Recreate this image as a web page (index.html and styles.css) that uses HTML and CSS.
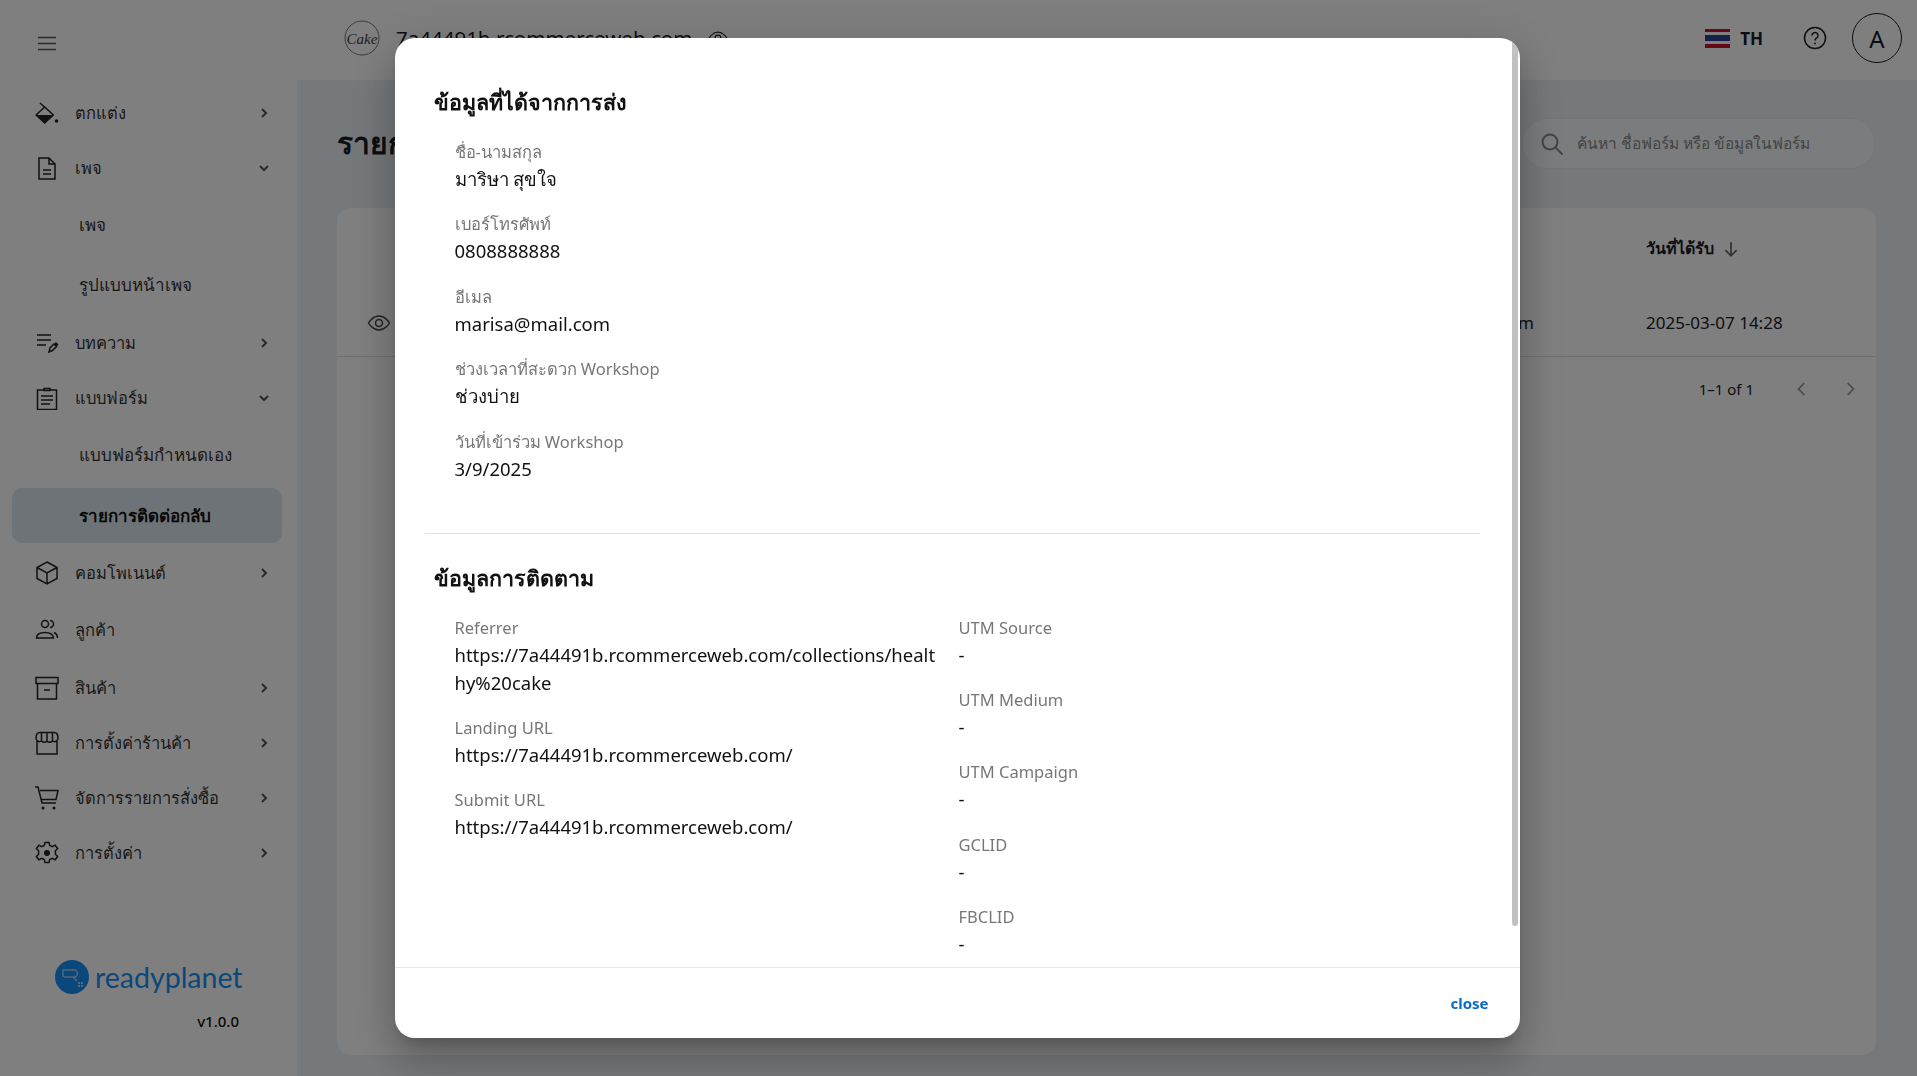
FILE: index.html
```html
<!DOCTYPE html>
<html lang="th">
<head>
    <meta charset="UTF-8">
    <meta name="viewport" content="width=device-width, initial-scale=1.0">
    <title>รายการติดต่อกลับ</title>
    <link rel="stylesheet" href="styles.css">
</head>
<body>

<div class="app">
    <!-- Sidebar -->
    <aside class="sidebar">
        <button class="burger" aria-label="menu">
            <svg viewBox="0 0 24 24" width="24" height="24"><path d="M4 6.500h18M4 12.500h18M4 18.500h18" class="ln"/></svg>
        </button>

        <nav class="menu">
            <a class="menu-item">
                <svg class="menu-icon" viewBox="0 0 24 24"><path d="M1 14l8.700-8 8.600 8-8.600 8zM5 2l5 4.500" class="ln"/><path d="M1 14h17.300l-8.600 8z" class="fill"/><circle cx="21.500" cy="20" r="1.800" class="fill"/></svg>
                <span>ตกแต่ง</span>
                <svg class="chev" viewBox="0 0 12 12"><path d="M4 2l4 4-4 4" class="ln2"/></svg>
            </a>
            <a class="menu-item">
                <svg class="menu-icon" viewBox="0 0 24 24"><path d="M4 2h10l6 6v15H4zM14 2v6h6M8 14h8M8 18h8" class="ln"/></svg>
                <span>เพจ</span>
                <svg class="chev" viewBox="0 0 12 12"><path d="M2 4l4 4 4-4" class="ln2"/></svg>
            </a>
            <a class="menu-sub">เพจ</a>
            <a class="menu-sub">รูปแบบหน้าเพจ</a>
            <a class="menu-item">
                <svg class="menu-icon" viewBox="0 0 24 24"><path d="M2 4h14M2 9h14M2 14h9" class="ln"/><path d="M14 21l1-4 4-4 2.500 2.500-4 4z" class="ln"/><path d="M19 13l2-2 2.500 2.500-2 2z" class="fill"/></svg>
                <span>บทความ</span>
                <svg class="chev" viewBox="0 0 12 12"><path d="M4 2l4 4-4 4" class="ln2"/></svg>
            </a>
            <a class="menu-item">
                <svg class="menu-icon" viewBox="0 0 24 24"><path d="M9 4H2.500v19.500h19V4H15M9 4.500V2.500h6v2zM6 10h12M6 14h12M6 18h9" class="ln"/></svg>
                <span>แบบฟอร์ม</span>
                <svg class="chev" viewBox="0 0 12 12"><path d="M2 4l4 4 4-4" class="ln2"/></svg>
            </a>
            <a class="menu-sub">แบบฟอร์มกำหนดเอง</a>
            <a class="menu-sub active">รายการติดต่อกลับ</a>
            <a class="menu-item">
                <svg class="menu-icon" viewBox="0 0 24 24"><path d="M12 1l10 5.500v11L12 23 2 17.500v-11zM2 6.500L12 12l10-5.500M12 12v11" class="ln"/></svg>
                <span>คอมโพเนนต์</span>
                <svg class="chev" viewBox="0 0 12 12"><path d="M4 2l4 4-4 4" class="ln2"/></svg>
            </a>
            <a class="menu-item spaced">
                <svg class="menu-icon" viewBox="0 0 24 24"><circle cx="10" cy="6" r="3.500" class="ln"/><path d="M1.500 20c0-4 4-5.500 8.500-5.500s8 1.500 8.500 5.500zM15 2.500a3.500 3.500 0 0 1 0 7M19 14.500c2 1 3.500 2.500 3.500 5.500" class="ln"/></svg>
                <span>ลูกค้า</span>
            </a>
            <a class="menu-item spaced">
                <svg class="menu-icon" viewBox="0 0 24 24"><path d="M1 1.500h22v6H1zM2.500 7.500v15.500h19V7.500M9 14h6" class="ln"/></svg>
                <span>สินค้า</span>
                <svg class="chev" viewBox="0 0 12 12"><path d="M4 2l4 4-4 4" class="ln2"/></svg>
            </a>
            <a class="menu-item">
                <svg class="menu-icon" viewBox="0 0 24 24"><path d="M2 10v13h20V10M5 1.500h14C21.500 1.500 23 4 23 7a3.500 3.500 0 0 1-5.500 3 3.500 3.500 0 0 1-5.500 0 3.500 3.500 0 0 1-5.500 0A3.500 3.500 0 0 1 1 7c0-3 1.500-5.500 4-5.500zM6.500 10V2M12 10V2M17.500 10V2" class="ln"/></svg>
                <span>การตั้งค่าร้านค้า</span>
                <svg class="chev" viewBox="0 0 12 12"><path d="M4 2l4 4-4 4" class="ln2"/></svg>
            </a>
            <a class="menu-item">
                <svg class="menu-icon" viewBox="0 0 24 24"><path d="M0 1h3l4 16h14M5 4.500h18l-2 9H6.500" class="ln"/><circle cx="8" cy="22" r="1.500" class="fill"/><circle cx="19" cy="22" r="1.500" class="fill"/></svg>
                <span>จัดการรายการสั่งซื้อ</span>
                <svg class="chev" viewBox="0 0 12 12"><path d="M4 2l4 4-4 4" class="ln2"/></svg>
            </a>
            <a class="menu-item">
                <svg class="menu-icon" viewBox="0 0 24 24"><path d="M10 1.500h4l.7 3 2.700 1.200 2.700-1.500 2.500 3.300-2.200 2.200v3.600l2.200 2.200-2.500 3.300-2.700-1.500-2.700 1.200-.7 3h-4l-.7-3-2.700-1.200-2.700 1.500-2.500-3.300 2.200-2.200v-3.600L1.400 7.500l2.500-3.300 2.700 1.500 2.700-1.200z" class="ln"/><circle cx="12" cy="12" r="3" class="fill"/></svg>
                <span>การตั้งค่า</span>
                <svg class="chev" viewBox="0 0 12 12"><path d="M4 2l4 4-4 4" class="ln2"/></svg>
            </a>
        </nav>

        <div class="brand">
            <div class="brand-row">
                <svg class="brand-mark" viewBox="0 0 34 34"><circle cx="17" cy="17" r="17" fill="#1490f8"/><path d="M8 17v-7h11a3.500 3.500 0 0 1 0 7H9M18 17l4 4" fill="none" stroke="#a8cdf0" stroke-width="1.500"/><path d="M23 22h2v2h-2zM26 22h2v2h-2zM23 25h2v2h-2zM26 25h2v2h-2z" fill="#a8cdf0"/></svg>
                <span class="brand-name">readyplanet</span>
            </div>
            <div class="version">v1.0.0</div>
        </div>
    </aside>

    <div class="content">
        <header class="topbar">
            <div class="shop">
                <svg class="shop-logo" viewBox="0 0 36 36"><circle cx="18" cy="18" r="17" fill="none" stroke="#777" stroke-width="1"/><text x="18" y="24" text-anchor="middle" class="shop-logo-text">Cake</text></svg>
                <span class="shop-name">7a44491b.rcommerceweb.com</span>
                <svg class="shop-eye" viewBox="0 0 24 24"><path d="M1.500 12S5.500 5 12 5s10.500 7 10.500 7-4 7-10.500 7S1.500 12 1.500 12z" class="ln"/><circle cx="12" cy="12" r="3.500" class="ln"/></svg>
            </div>
            <div class="top-actions">
                <div class="flag"><i class="flag-red"></i><i class="flag-white"></i><i class="flag-blue"></i><i class="flag-white"></i><i class="flag-red"></i></div>
                <span class="lang">TH</span>
                <svg class="help" viewBox="0 0 24 24"><circle cx="12" cy="12" r="10.500" class="ln"/><path d="M9 9.500a3 3 0 1 1 4.500 2.600c-1 .6-1.500 1.200-1.500 2.400" class="ln"/><circle cx="12" cy="17.500" r=".9" class="fill"/></svg>
                <div class="avatar">A</div>
            </div>
        </header>

        <main class="page">
            <div class="page-head">
                <h1 class="page-title">รายการติดต่อกลับ</h1>
                <div class="search">
                    <svg class="search-icon" viewBox="0 0 24 24"><circle cx="10" cy="10" r="7.500"/><path d="M15.500 15.500l7 7"/></svg>
                    <span>ค้นหา ชื่อฟอร์ม หรือ ข้อมูลในฟอร์ม</span>
                </div>
            </div>

            <section class="card">
                <div class="table-head">
                    <span class="th-date">วันที่ได้รับ</span>
                    <svg class="th-arrow" viewBox="0 0 16 16"><path d="M8 2v12M3 9l5 5 5-5"/></svg>
                </div>
                <div class="table-row">
                    <svg class="row-eye" viewBox="0 0 24 24"><path d="M1.500 12S5.500 5 12 5s10.500 7 10.500 7-4 7-10.500 7S1.500 12 1.500 12z" class="ln"/><circle cx="12" cy="12" r="3.500" class="ln"/></svg>
                    <span class="row-mail">marisa@mail.com</span>
                    <span class="row-date">2025-03-07 14:28</span>
                </div>
                <div class="pager">
                    <span class="pager-text">1–1 of 1</span>
                    <svg class="pager-btn" viewBox="0 0 12 12"><path d="M8 1L3 6l5 5"/></svg>
                    <svg class="pager-btn" viewBox="0 0 12 12"><path d="M4 1l5 5-5 5"/></svg>
                </div>
            </section>
        </main>
    </div>
</div>

<!-- Submission detail dialog -->
<div class="overlay">
    <div class="modal">
        <div class="modal-body">
            <h2 class="section-title">ข้อมูลที่ได้จากการส่ง</h2>
            <dl class="fields">
                <div class="field"><dt>ชื่อ-นามสกุล</dt><dd>มาริษา สุขใจ</dd></div>
                <div class="field"><dt>เบอร์โทรศัพท์</dt><dd>0808888888</dd></div>
                <div class="field"><dt>อีเมล</dt><dd>marisa@mail.com</dd></div>
                <div class="field"><dt>ช่วงเวลาที่สะดวก Workshop</dt><dd>ช่วงบ่าย</dd></div>
                <div class="field"><dt>วันที่เข้าร่วม Workshop</dt><dd>3/9/2025</dd></div>
            </dl>

            <hr class="divider">

            <h2 class="section-title">ข้อมูลการติดตาม</h2>
            <div class="tracking">
                <dl class="fields">
                    <div class="field"><dt>Referrer</dt><dd>https://7a44491b.rcommerceweb.com/collections/healthy%20cake</dd></div>
                    <div class="field"><dt>Landing URL</dt><dd>https://7a44491b.rcommerceweb.com/</dd></div>
                    <div class="field"><dt>Submit URL</dt><dd>https://7a44491b.rcommerceweb.com/</dd></div>
                </dl>
                <dl class="fields">
                    <div class="field"><dt>UTM Source</dt><dd>-</dd></div>
                    <div class="field"><dt>UTM Medium</dt><dd>-</dd></div>
                    <div class="field"><dt>UTM Campaign</dt><dd>-</dd></div>
                    <div class="field"><dt>GCLID</dt><dd>-</dd></div>
                    <div class="field"><dt>FBCLID</dt><dd>-</dd></div>
                </dl>
            </div>
        </div>
        <div class="modal-foot">
            <button class="close-btn">close</button>
        </div>
        <div class="scroll-thumb"></div>
    </div>
</div>

</body>
</html>
```

FILE: styles.css
```css
* {
    box-sizing: border-box;
}

html, body {
    height: 100%;
    margin: 0;
    overflow: hidden;
}

body {
    font-family: 'Noto Sans', sans-serif;
    color: #171c26;
    background: #ebf2f9;
}

.ln, .ln2 {
    fill: none;
    stroke: currentColor;
    stroke-width: 1.500;
}

.ln2 {
    stroke-width: 2;
}

.fill {
    fill: currentColor;
}

.app {
    display: flex;
    height: 100%;
}

/* Sidebar */
.sidebar {
    width: 297px;
    flex: none;
    background: white;
    padding: 30px 15px 0 12px;
    display: flex;
    flex-direction: column;
    color: #222;
}

.burger {
    width: 28px;
    height: 28px;
    margin: 0 0 0 20px;
    padding: 0;
    border: none;
    background: none;
    color: #555;
}

.menu {
    margin-top: 26.500px;
    display: flex;
    flex-direction: column;
}

.menu-item {
    height: 55px;
    display: flex;
    align-items: center;
    padding: 2px 12px 0 23px;
    font-size: 16.500px;
    font-weight: 500;
    color: #333;
}

.menu-item.spaced {
    margin-top: 2.500px;
}

.menu-icon {
    width: 24px;
    height: 24px;
    margin-right: 16px;
    flex: none;
    color: #222;
}

.menu-item span {
    flex: 1;
}

.chev {
    width: 12px;
    height: 12px;
    color: #555;
}

.menu-sub {
    height: 60px;
    display: flex;
    align-items: center;
    padding-left: 67px;
    font-size: 17px;
    font-weight: 500;
    color: #333;
}

.menu-sub.active {
    height: 55px;
    margin: 3px 0 1.500px;
    background: #dde6ee;
    border-radius: 10px;
    font-weight: 600;
    color: #111;
}

.brand {
    margin-top: auto;
    padding: 0 0 45px 43px;
    width: 227px;
}

.brand-row {
    display: flex;
    align-items: center;
    gap: 6px;
}

.brand-mark {
    width: 34px;
    height: 34px;
    flex: none;
}

.brand-name {
    font-family: 'Lato', sans-serif;
    font-size: 28.500px;
    font-weight: 400;
    line-height: 34px;
    color: #1490f8;
}

.version {
    margin-top: 17px;
    text-align: right;
    font-size: 15px;
    font-weight: 500;
    color: #111;
}

/* Top area */
.content {
    flex: 1;
    min-width: 0;
    display: flex;
    flex-direction: column;
}

.topbar {
    height: 80px;
    flex: none;
    background: white;
    display: flex;
    align-items: center;
    justify-content: space-between;
    padding: 0 15px 4px 47px;
}

.shop {
    display: flex;
    align-items: center;
    gap: 16px;
}

.shop-logo {
    width: 36px;
    height: 36px;
}

.shop-logo-text {
    font-family: 'Liberation Serif', serif;
    font-style: italic;
    font-size: 15px;
    fill: #444;
}

.shop-name {
    font-size: 20.500px;
}

.shop-eye {
    width: 20px;
    height: 20px;
}

.top-actions {
    display: flex;
    align-items: center;
}

.flag {
    width: 25px;
    height: 19px;
    display: flex;
    flex-direction: column;
}

.flag i {
    display: block;
    flex: 1;
}

.flag .flag-blue {
    flex: 2;
    background: #2d3f8f;
}

.flag-red {
    background: #c8102e;
}

.flag-white {
    background: white;
}

.lang {
    margin-left: 10px;
    font-size: 17px;
    font-weight: 700;
}

.help {
    width: 24px;
    height: 24px;
    margin-left: 40px;
}

.avatar {
    width: 50px;
    height: 50px;
    margin-left: 25px;
    border: 1.500px solid #171c26;
    border-radius: 50%;
    display: flex;
    align-items: center;
    justify-content: center;
    font-size: 24px;
}

.page {
    flex: 1;
    min-height: 0;
    padding: 38px 41px 21px 40px;
    display: flex;
    flex-direction: column;
}

.page-head {
    height: 90px;
    flex: none;
    display: flex;
    justify-content: space-between;
    align-items: flex-start;
}

.page-title {
    margin: 0;
    font-size: 30px;
    font-weight: 700;
    line-height: 50px;
}

.search {
    width: 354px;
    height: 51px;
    padding: 0 17px;
    border: 1px solid #e6ecf2;
    border-radius: 26px;
    background: #f5f9fc;
    display: flex;
    align-items: center;
    gap: 13px;
    font-size: 15.500px;
    color: #888;
}

.search-icon {
    width: 24px;
    height: 24px;
    flex: none;
    fill: none;
    stroke: #888;
    stroke-width: 2;
}

.card {
    flex: 1;
    background: white;
    border-radius: 14px;
}

.table-head {
    height: 81px;
    display: flex;
    align-items: center;
    padding-left: 1309px;
    font-size: 16px;
    font-weight: 600;
}

.th-arrow {
    width: 18px;
    height: 18px;
    margin-left: 8px;
    fill: none;
    stroke: #666;
    stroke-width: 1.500;
}

.table-row {
    height: 68px;
    border-bottom: 1px solid #ddd;
    display: flex;
    align-items: center;
    font-size: 17px;
}

.row-eye {
    width: 24px;
    height: 24px;
    margin-left: 30px;
    color: #444;
}

.row-mail {
    margin-left: 1000px;
    width: 255px;
}

.pager {
    height: 64px;
    display: flex;
    align-items: center;
    justify-content: flex-end;
    padding-right: 19px;
    font-size: 15px;
    gap: 34px;
}

.pager-text {
    margin-right: 7px;
}

.pager-btn {
    width: 14px;
    height: 14px;
    fill: none;
    stroke: #999;
    stroke-width: 1.500;
}

/* Dialog */
.overlay {
    position: fixed;
    inset: 0;
    background: rgba(0, 0, 0, .5);
    display: flex;
    justify-content: center;
    align-items: flex-start;
    padding-top: 38px;
}

.modal {
    position: relative;
    width: 1125px;
    height: 1000px;
    margin-left: -3px;
    background: white;
    border-radius: 20px;
    overflow: hidden;
    display: flex;
    flex-direction: column;
    box-shadow: 0 11px 15px -7px rgba(0, 0, 0, .2), 0 24px 38px 3px rgba(0, 0, 0, .14), 0 9px 46px 8px rgba(0, 0, 0, .12);
}

.modal-body {
    flex: 1;
    min-height: 0;
    overflow: hidden;
    padding: 44px 40px 0 30px;
}

.scroll-thumb {
    position: absolute;
    top: 0;
    right: 2px;
    width: 6px;
    height: 888px;
    background: #c1c1c1;
    border-radius: 0 0 3px 3px;
}

.section-title {
    margin: 0 0 0 9px;
    font-size: 21.500px;
    font-weight: 600;
    line-height: 40px;
    color: #111;
}

.fields {
    margin: 16px 0 0 30px;
}

.field {
    margin-bottom: 17.400px;
}

.field dt {
    font-size: 16.500px;
    line-height: 27px;
    color: #777;
}

.field dd {
    margin: 0;
    font-size: 18.500px;
    line-height: 28px;
    color: #111;
    word-break: break-all;
}

.divider {
    margin: 50px 0 24px;
    border: none;
    border-top: 1px solid #e0e0e0;
}

.tracking {
    display: grid;
    grid-template-columns: 534px 1fr;
}

.tracking .fields {
    margin-left: 30px;
    margin-right: 15px;
}

.tracking .fields + .fields {
    margin-left: 0;
}

.modal-foot {
    height: 71px;
    flex: none;
    border-top: 1px solid #e6e6e6;
    display: flex;
    align-items: center;
    justify-content: flex-end;
    padding-right: 31px;
}

.close-btn {
    border: none;
    background: none;
    padding: 0;
    font-family: 'Noto Sans', sans-serif;
    font-size: 15px;
    font-weight: 700;
    color: #0b6bcb;
}
```
